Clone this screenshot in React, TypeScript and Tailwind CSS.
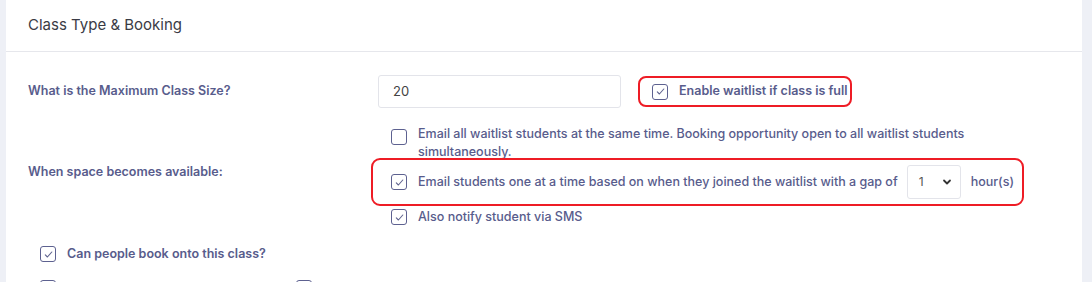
import React from "react";

const txt = "text-[#585c8c]";

function Check({ checked }: { checked?: boolean }) {
  return (
    <span className="inline-flex h-[16px] w-[16px] shrink-0 items-center justify-center rounded-[3px] border-[1.5px] border-[#5d6190] bg-white">
      {checked && (
        <svg width="11" height="11" viewBox="0 0 11 11" fill="none">
          <path d="M2.3 5.8 L4.4 8 L8.8 3" stroke="#60648f" strokeWidth="1.1" strokeLinecap="round" strokeLinejoin="round" />
        </svg>
      )}
    </span>
  );
}

export default function App() {
  return (
    <div className="flex h-[282px] w-[1092px] overflow-hidden bg-[#eef0f6] pl-[6px] pr-[10px]" style={{ fontFamily: "Inter, 'Noto Sans', sans-serif" }}>
      <div className="flex-1 bg-white">
        <div className="flex h-[52px] items-center border-b border-[#e6e7ec] px-[22px]">
          <h2 className="text-[15px] font-normal text-[#3a3b45]">Class Type &amp; Booking</h2>
        </div>
        <div className="pl-[22px] pt-[23px]">
          {/* Row 1 */}
          <div className="flex items-center">
            <div className={`w-[350px] text-[12.5px] font-semibold ${txt}`}>What is the Maximum Class Size?</div>
            <div className="flex h-[33px] w-[243px] items-center rounded-[3px] border border-[#e3e4ea] px-[14px] text-[13px] text-[#444]">20</div>
            <div className="ml-[17px] flex h-[31px] items-center gap-[11px] rounded-[8px] border-2 border-[#ee1c25] pl-[12px] pr-[2px]">
              <Check checked />
              <span className={`text-[12.5px] font-semibold ${txt}`}>Enable waitlist if class is full</span>
            </div>
          </div>

          {/* Row 2 */}
          <div className="mt-[17px] flex">
            <div className={`flex w-[350px] items-center pb-[6px] text-[12.5px] font-semibold ${txt}`}>When space becomes available:</div>
            <div className="flex flex-col pl-[13px]">
              <div className="flex items-start gap-[11px]">
                <span className="mt-[2px]"><Check /></span>
                <span className={`w-[600px] text-[12.5px] font-medium leading-[18px] ${txt}`}>
                  Email all waitlist students at the same time. Booking opportunity open to all waitlist students simultaneously.
                </span>
              </div>
              <div className="-ml-[20px] mt-[-3px] flex h-[48px] w-[653px] items-center gap-[11px] rounded-[9px] border-2 border-[#ee1c25] pl-[18px]">
                <Check checked />
                <span className={`text-[12.5px] font-medium ${txt}`}>Email students one at a time based on when they joined the waitlist with a gap of</span>
                <div className="ml-[-2px] flex h-[34px] w-[54px] items-center justify-between rounded-[3px] border border-[#e3e4ea] pl-[11px] pr-[8px] text-[12px] text-[#555]">
                  <span>1</span>
                  <svg width="10" height="10" viewBox="0 0 10 10" fill="none">
                    <path d="M2 3.5 L5 6.5 L8 3.5" stroke="#333" strokeWidth="1.8" strokeLinecap="round" strokeLinejoin="round" />
                  </svg>
                </div>
                <span className={`ml-[-1px] text-[12.5px] font-medium ${txt}`}>hour(s)</span>
              </div>
              <div className="mt-[2px] flex h-[18px] items-center gap-[11px]">
                <Check checked />
                <span className={`text-[12.5px] font-medium ${txt}`}>Also notify student via SMS</span>
              </div>
            </div>
          </div>

          {/* Row 3 */}
          <div className="mt-[19px] flex h-[18px] items-center gap-[11px] pl-[12px]">
            <Check checked />
            <span className={`text-[12.5px] font-semibold ${txt}`}>Can people book onto this class?</span>
          </div>

          {/* Row 4 */}
          <div className="mt-[17px] flex items-start pl-[12px]">
            <div className="flex w-[256px] shrink-0 items-start gap-[11px]">
              <Check />
              <span className={`text-[12.5px] font-semibold ${txt}`}>Can book via Quick Book</span>
            </div>
            <div className="flex items-start gap-[11px]">
              <Check />
              <span className={`text-[12.5px] font-medium ${txt}`}>Allow people to purchase drop-in passes when they can't book this full class</span>
            </div>
          </div>
        </div>
      </div>
    </div>
  );
}
